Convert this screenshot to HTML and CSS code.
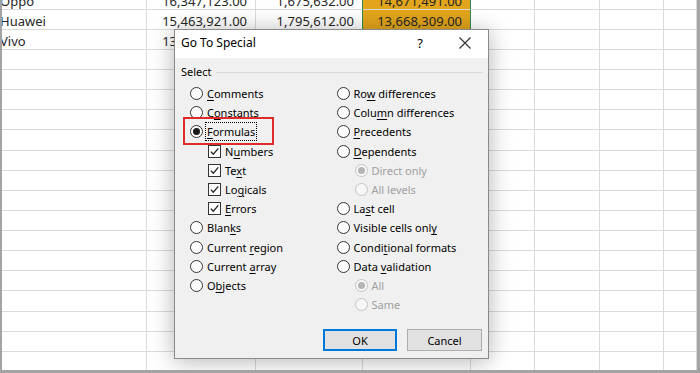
FILE: index.html
```html
<!DOCTYPE html>
<html lang="en">
<head>
  <meta charset="UTF-8" />
  <meta name="viewport" content="width=device-width, initial-scale=1.0" />
  <title>Go To Special</title>
  <link rel="stylesheet" href="styles.css">
</head>
<body>

  <div class="frame">

    <!-- worksheet -->
    <div class="sheet">
      <div class="row">
        <div class="cell name">Oppo</div>
        <div class="cell num">16,347,123.00</div>
        <div class="cell num">1,675,632.00</div>
        <div class="cell num pick">14,671,491.00</div>
        <div class="cell"></div>
        <div class="cell"></div>
        <div class="cell"></div>
        <div class="cell"></div>
      </div>
      <div class="row">
        <div class="cell name">Huawei</div>
        <div class="cell num">15,463,921.00</div>
        <div class="cell num">1,795,612.00</div>
        <div class="cell num pick">13,668,309.00</div>
        <div class="cell"></div>
        <div class="cell"></div>
        <div class="cell"></div>
        <div class="cell"></div>
      </div>
      <div class="row">
        <div class="cell name">Vivo</div>
        <div class="cell num">13,954,280.00</div>
        <div class="cell num">1,582,417.00</div>
        <div class="cell num pick">12,371,863.00</div>
        <div class="cell"></div>
        <div class="cell"></div>
        <div class="cell"></div>
        <div class="cell"></div>
      </div>
      <div class="blank">
        <div class="col"></div>
        <div class="col"></div>
        <div class="col"></div>
        <div class="col"></div>
        <div class="col"></div>
        <div class="col"></div>
        <div class="col"></div>
        <div class="col"></div>
      </div>
    </div>

    <!-- Go To Special dialog -->
    <div class="dialog">
      <div class="title-bar">
        <span class="title">Go To Special</span>
        <span class="help">?</span>
        <svg class="close" width="12" height="12" viewBox="0 0 12 12">
          <path d="M0.5 0.5 L11.5 11.5 M11.5 0.5 L0.5 11.5" stroke="#333" stroke-width="1.2" fill="none"/>
        </svg>
      </div>

      <div class="dialog-body">
        <div class="group-head">
          <span>Select</span>
          <i class="rule"></i>
        </div>

        <div class="options">
          <div class="opt-col">
            <div class="opt"><span class="radio"></span><span><u>C</u>omments</span></div>
            <div class="opt"><span class="radio"></span><span>C<u>o</u>nstants</span></div>
            <div class="opt"><span class="radio on"></span><span class="focus"><u>F</u>ormulas</span></div>
            <div class="opt sub"><span class="check"><svg width="11" height="11" viewBox="0 0 11 11"><path d="M1.8 5.6 L4.3 8.2 L9.3 2.4" stroke="#222" stroke-width="1.3" fill="none"/></svg></span><span>N<u>u</u>mbers</span></div>
            <div class="opt sub"><span class="check"><svg width="11" height="11" viewBox="0 0 11 11"><path d="M1.8 5.6 L4.3 8.2 L9.3 2.4" stroke="#222" stroke-width="1.3" fill="none"/></svg></span><span>Te<u>x</u>t</span></div>
            <div class="opt sub"><span class="check"><svg width="11" height="11" viewBox="0 0 11 11"><path d="M1.8 5.6 L4.3 8.2 L9.3 2.4" stroke="#222" stroke-width="1.3" fill="none"/></svg></span><span>Lo<u>g</u>icals</span></div>
            <div class="opt sub"><span class="check"><svg width="11" height="11" viewBox="0 0 11 11"><path d="M1.8 5.6 L4.3 8.2 L9.3 2.4" stroke="#222" stroke-width="1.3" fill="none"/></svg></span><span><u>E</u>rrors</span></div>
            <div class="opt"><span class="radio"></span><span>Blan<u>k</u>s</span></div>
            <div class="opt"><span class="radio"></span><span>Current <u>r</u>egion</span></div>
            <div class="opt"><span class="radio"></span><span>Current <u>a</u>rray</span></div>
            <div class="opt"><span class="radio"></span><span>O<u>b</u>jects</span></div>
          </div>
          <div class="opt-col">
            <div class="opt"><span class="radio"></span><span>Ro<u>w</u> differences</span></div>
            <div class="opt"><span class="radio"></span><span>Colu<u>m</u>n differences</span></div>
            <div class="opt"><span class="radio"></span><span><u>P</u>recedents</span></div>
            <div class="opt"><span class="radio"></span><span><u>D</u>ependents</span></div>
            <div class="opt sub off"><span class="radio on"></span><span>Direct only</span></div>
            <div class="opt sub off"><span class="radio"></span><span>All levels</span></div>
            <div class="opt"><span class="radio"></span><span>La<u>s</u>t cell</span></div>
            <div class="opt"><span class="radio"></span><span>Visible cells onl<u>y</u></span></div>
            <div class="opt"><span class="radio"></span><span>Condi<u>t</u>ional formats</span></div>
            <div class="opt"><span class="radio"></span><span>Data <u>v</u>alidation</span></div>
            <div class="opt sub off"><span class="radio on"></span><span>All</span></div>
            <div class="opt sub off"><span class="radio"></span><span>Same</span></div>
          </div>
        </div>

        <div class="buttons">
          <button class="btn default">OK</button>
          <button class="btn">Cancel</button>
        </div>
      </div>

      <!-- red highlight around Formulas -->
      <div class="mark"></div>
    </div>

  </div>

</body>
</html>
```

FILE: styles.css
```css
body {
  margin: 0;
  width: 700px;
  height: 373px;
  overflow: hidden;
  background-color: #ffffff;
  font-family: 'Noto Sans', 'Liberation Sans', sans-serif;
}

.frame {
  position: relative;
  box-sizing: border-box;
  height: 373px;
  border-left: 2px solid #a3a3a3;
  border-right: 3px solid #a3a3a3;
  border-bottom: 3px solid #a3a3a3;
  overflow: hidden;
}

/* worksheet */
.sheet {
  display: flex;
  flex-direction: column;
  height: 380px;
  margin-top: -10px;
}

.row,
.blank {
  display: grid;
  grid-template-columns: 145px 109px 107px 108px 64px 65px 64px 1fr;
}

.row {
  height: 20.125px;
}

.cell {
  box-sizing: border-box;
  border-right: 1px solid #dadada;
  border-bottom: 1px solid #dadada;
  font-size: 13px;
  line-height: 19px;
  padding-top: 2px;
  color: #262626;
  white-space: nowrap;
  overflow: hidden;
}

.name {
  text-indent: -2px;
}

.num {
  text-align: right;
  padding-right: 8px;
}

.pick {
  background-color: #e2a51c;
  border-right-color: #2e8b57;
  box-shadow: -1px 0 0 #2e8b57;
}

.blank {
  flex: 1;
  background-image: repeating-linear-gradient(to bottom, transparent 0, transparent 19.125px, #dadada 19.125px, #dadada 20.125px);
}

.blank .col {
  border-right: 1px solid #dadada;
}

/* dialog */
.dialog {
  position: absolute;
  left: 172px;
  top: 29px;
  width: 315px;
  height: 330px;
  box-sizing: border-box;
  border: 1px solid #8a8a8a;
  background-color: #f0f0f0;
  box-shadow: 0 2px 22px rgba(0, 0, 0, 0.3);
  display: flex;
  flex-direction: column;
  font-size: 11px;
  color: #000;
}

.title-bar {
  display: flex;
  align-items: center;
  height: 25px;
  padding: 0 0 3px 6px;
  background-color: #ffffff;
}

.title {
  flex: 1;
  font-size: 12px;
}

.help {
  font-size: 13px;
  margin-right: 36px;
}

.close {
  margin-right: 17px;
}

.dialog-body {
  flex: 1;
  display: flex;
  flex-direction: column;
  padding: 0 5px 7px 6px;
}

.group-head {
  display: flex;
  align-items: center;
  gap: 4px;
  margin-top: 6px;
  line-height: 16px;
}

.rule {
  flex: 1;
  height: 1px;
  background-color: #d9d9d9;
}

.options {
  display: flex;
  margin: 4px 0 0 9px;
}

.opt-col {
  width: 151px;
}

.opt {
  display: flex;
  align-items: center;
  gap: 4px;
  height: 19.2px;
  white-space: nowrap;
}

.opt u {
  text-underline-offset: 2px;
}

.opt.sub {
  padding-left: 18px;
}

.opt.off {
  color: #a0a0a0;
}

.radio {
  position: relative;
  box-sizing: border-box;
  width: 13px;
  height: 13px;
  border: 1px solid #333;
  border-radius: 50%;
  background-color: #ffffff;
  flex-shrink: 0;
}

.radio.on::after {
  content: '';
  position: absolute;
  left: 2px;
  top: 2px;
  width: 7px;
  height: 7px;
  border-radius: 50%;
  background-color: #1a1a1a;
}

.off .radio {
  border-color: #c4c4c4;
  background-color: #f7f7f7;
}

.off .radio.on::after {
  background-color: #b4b4b4;
}

.check {
  box-sizing: border-box;
  width: 13px;
  height: 13px;
  border: 1px solid #333;
  background-color: #ffffff;
  flex-shrink: 0;
}

.check svg {
  display: block;
}

.focus {
  outline: 1px dotted #000;
  outline-offset: 1px;
}

.buttons {
  margin-top: auto;
  display: flex;
  justify-content: flex-end;
  gap: 10px;
  margin-right: 1px;
}

.btn {
  box-sizing: border-box;
  width: 75px;
  height: 22px;
  padding: 0;
  border: 1px solid #adadad;
  background-color: #e1e1e1;
  font-family: 'Noto Sans', 'Liberation Sans', sans-serif;
  font-size: 11px;
  color: #000;
}

.btn.default {
  width: 74px;
  border: 2px solid #0078d7;
}

.mark {
  position: absolute;
  left: 8px;
  top: 87px;
  width: 91px;
  height: 28px;
  box-sizing: border-box;
  border: 2px solid #e12a2a;
}
```
